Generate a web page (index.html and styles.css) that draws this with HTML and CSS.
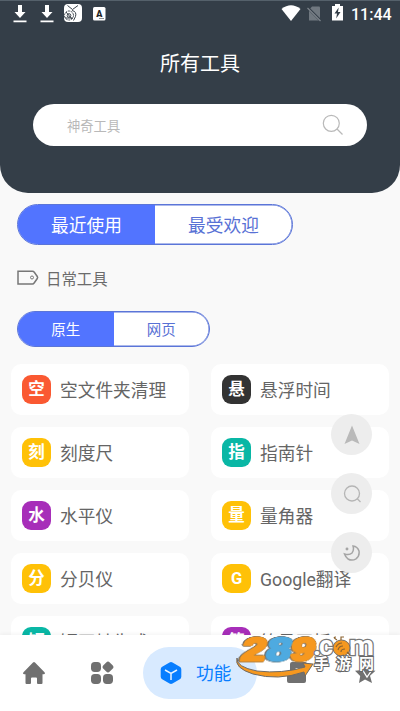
FILE: index.html
```html
<!DOCTYPE html>
<html lang="zh-CN">
<head>
<meta charset="utf-8">
<title>所有工具</title>
<link rel="stylesheet" href="styles.css">
</head>
<body>
<div class="screen">
  <header class="header">
    <div class="status">
      <div class="status-left">
        <svg width="14" height="18" viewBox="0 0 14 18"><path d="M5 0h4v7h3.500L7 13 1.500 7H5zM.5 15.500h13v1.800H.5z" fill="#fff"/></svg>
        <svg width="14" height="18" viewBox="0 0 14 18"><path d="M5 0h4v7h3.500L7 13 1.500 7H5zM.5 15.500h13v1.800H.5z" fill="#fff"/></svg>
        <svg class="app-note" width="18" height="18" viewBox="0 0 18 18"><rect width="18" height="18" rx="4" fill="#fff"/><g fill="none" stroke="#3a424a"><path d="M3.500 1.500 8.500 5.500 14 1.500"/><circle cx="5" cy="11.500" r="4.500" stroke-dasharray="2 .8"/><circle cx="5" cy="11.500" r="1.800"/><path d="M8 6.500q5 1 3.500 6l-2 4M1 14h8M2 8l6 7"/></g></svg>
        <svg class="app-a" width="13" height="14" viewBox="0 0 13 14"><rect width="12.500" height="13.500" rx="1.500" fill="#fff"/><text x="6.200" y="10" text-anchor="middle" class="app-letter">A</text><path d="M6 11.500h5" stroke="#59636c" stroke-width=".7"/></svg>
      </div>
      <div class="status-right">
        <svg class="wifi" width="20" height="17" viewBox="0 0 20 17"><path d="M.5 4Q10-3.500 19.500 4L10 16z" fill="#fff"/></svg>
        <svg class="sim" width="15" height="16" viewBox="0 0 15 16"><path d="M5 .5h7q1 0 1 1v13H2V4z" fill="#707880"/><path d="M0 1 14 15" stroke="#343e48" stroke-width="2.500"/><path d="M.5 2 13.500 15" stroke="#7c848b" stroke-width="1.200"/></svg>
        <svg class="battery" width="11" height="17" viewBox="0 0 11 17"><path d="M3 0h5v2h3v14.500H0V2h3z" fill="#fff"/><path d="M6.700 3.500 2.500 9.500H5l-.8 5L8.500 8H6z" fill="#343e48"/></svg>
        <span class="clock">11:44</span>
      </div>
    </div>
    <h1 class="title">所有工具</h1>
    <div class="search">
      <span>神奇工具</span>
      <svg width="22" height="22" viewBox="0 0 22 22" fill="none" stroke="#b9b9b9" stroke-width="1.200"><circle cx="9.300" cy="9.300" r="8"/><path d="m15 15 5.500 5.500"/></svg>
    </div>
  </header>

  <main class="content">
    <div class="tabs tabs-large"><span class="tab tab-on">最近使用</span><span class="tab">最受欢迎</span></div>
    <div class="section">
      <svg width="22" height="16" viewBox="0 0 22 16" fill="none" stroke="#777" stroke-width="1.500"><path d="M1 1.200h14.500q1 0 1.800 1l3 4.300q.7 1 0 2l-3 4.300q-.8 1.200-1.800 1.200H1z"/><circle cx="15" cy="7.500" r="1.500" stroke-width="1"/></svg>
      <span>日常工具</span>
    </div>
    <div class="tabs tabs-small"><span class="tab tab-on">原生</span><span class="tab">网页</span></div>
    <div class="grid">
      <div class="card"><b class="badge red">空</b><span class="name">空文件夹清理</span></div>
      <div class="card"><b class="badge dark">悬</b><span class="name">悬浮时间</span></div>
      <div class="card"><b class="badge yellow">刻</b><span class="name">刻度尺</span></div>
      <div class="card"><b class="badge teal">指</b><span class="name">指南针</span></div>
      <div class="card"><b class="badge purple">水</b><span class="name">水平仪</span></div>
      <div class="card"><b class="badge yellow">量</b><span class="name">量角器</span></div>
      <div class="card"><b class="badge yellow">分</b><span class="name">分贝仪</span></div>
      <div class="card"><b class="badge yellow">G</b><span class="name">Google翻译</span></div>
      <div class="card"><b class="badge teal">短</b><span class="name">短网址生成</span></div>
      <div class="card"><b class="badge purple">简</b><span class="name">简易画板</span></div>
    </div>
  </main>

  <div class="floating">
    <span class="fab"><svg width="16" height="20" viewBox="0 0 16 20"><path d="M8 .5 15.500 19 8 15.500.5 19z" fill="#b9b9b9"/></svg></span>
    <span class="fab"><svg width="18" height="18" viewBox="0 0 18 18" fill="none" stroke="#b5b5b5" stroke-width="1.300"><circle cx="9" cy="8.500" r="7.500"/><path d="m14 13.500 3.500 3.500"/></svg></span>
    <span class="fab"><svg width="18" height="18" viewBox="0 0 18 18" fill="none" stroke="#a5a5a5" stroke-width="1.500"><path d="M10 2q4.500.5 6 5 .8 5-3 7.800-4 2.500-8 .2Q2.500 13 1.500 10q5 1.500 7.500-1 2.300-3 1-7z"/><circle cx="4" cy="5" r=".7" fill="#a5a5a5"/></svg></span>
  </div>

  <nav class="nav">
    <span class="nav-item"><svg width="24" height="24" viewBox="0 0 24 24"><path d="M11 1.500q1-1 2 0l9.500 9.700q1.200 1.800-.8 2h-1.200V22q0 1-1 1H16q-1 0-1-1v-4.500q0-1-1-1h-4q-1 0-1 1V22q0 1-1 1H4.500q-1 0-1-1v-8.800H2.300q-2-.2-.8-2z" fill="#707070"/></svg></span>
    <span class="nav-item"><svg width="24" height="24" viewBox="0 0 24 24" fill="#707070"><rect x="1" y="1" width="10" height="10" rx="3.700"/><rect x="1" y="13" width="10" height="10" rx="3.700"/><rect x="13" y="13" width="10" height="10" rx="3.700"/><rect x="13.500" y="1.500" width="9" height="9" rx="2.500" transform="rotate(45 18 6)"/></svg></span>
    <span class="nav-active"><svg width="22" height="24" viewBox="0 0 22 24"><path d="M9.500 1.500q1.500-.8 3 0l7.300 4.200q1.500.8 1.500 2.500v7.600q0 1.700-1.500 2.500l-7.300 4.200q-1.500.8-3 0l-7.300-4.200Q.7 17.500.7 15.800V8.200q0-1.700 1.500-2.500z" fill="#087eff"/><path d="m5 9 6 3.500L17 9M11 12.500V19" fill="none" stroke="#e9f4ff" stroke-width="1.500"/></svg><span class="nav-label">功能</span></span>
    <span class="nav-item"><svg width="24" height="24" viewBox="0 0 24 24" fill="#707070"><path d="M4 3q0-2 2-2h13q2 0 2 2v4H10L8 10H4z"/><path d="M1 12q0-2 2-2h4.500L10 8h8q2 0 2 2v10q0 2-2 2H3q-2 0-2-2z"/></svg></span>
    <span class="nav-item"><svg width="24" height="24" viewBox="0 0 24 24"><path d="m11 3 3 6 7.500.8-5.500 5 2 7.200-7-3.500L5 22l1.200-7L1 9.800 8 9z" fill="#707070"/><path d="m8 8 5 8 7-10" stroke="#fff" stroke-width="1.300" fill="none"/></svg></span>
  </nav>

  <svg class="brand" width="145" height="60" viewBox="0 0 145 60">
    <path d="M2 22q-1 9 20 13 25 3 48-4l-2-4 10 1-8 12-1-4Q43 45 18 38-1 32 2 22z" fill="#f6981f" stroke="#6f6a64" stroke-width="1"/>
    <g class="brand-number" transform="translate(1 24.500) skewX(-12)">
      <text x="4" y="0" textLength="24" lengthAdjust="spacingAndGlyphs" class="orange">2</text>
      <text x="29" y="0" textLength="24" lengthAdjust="spacingAndGlyphs" class="blue">8</text>
      <text x="53" y="0" textLength="24" lengthAdjust="spacingAndGlyphs" class="orange">9</text>
    </g>
    <g class="brand-domain"><text x="78" y="18.500">.</text><text x="84" y="18.500" textLength="14" lengthAdjust="spacingAndGlyphs">c</text><text x="114" y="18.500" textLength="25" lengthAdjust="spacingAndGlyphs">m</text></g>
    <ellipse cx="106.500" cy="12" rx="8.500" ry="8" fill="#f6981f" stroke="#777067"/><path d="M102 4q-5-3-1-3M106 4V1h3M101 11q2-4 6-4M103 14q1-4 5-4M106 16q0-3 4-3M112 16l3 3" fill="none" stroke="#8b6330" stroke-width="1.200"/>
    <g class="brand-site"><text x="79" y="33">手</text><text x="101" y="33">游</text><text x="124" y="33">网</text></g>
  </svg>
</div>
</body>
</html>
```
FILE: styles.css
```css
* { box-sizing: border-box; }
body { margin: 0; font-family: Roboto, "Noto Sans CJK SC", sans-serif; }
svg { display: block; flex-shrink: 0; }
.screen { position: relative; width: 400px; height: 711px; overflow: hidden; background: #f9f9f9; display: flex; flex-direction: column; }
.header { height: 193px; flex-shrink: 0; background: #343e48; border-top: 1px solid #55616b; border-radius: 0 0 28px 28px; color: #fff; }
.status { height: 28px; display: flex; justify-content: space-between; padding: 4px 9px 0 13px; }
.status-left { display: flex; gap: 13px; }
.app-note { margin-left: -3px; margin-top: -1px; }
.app-a { margin-top: 2px; margin-left: -2px; }
.app-letter { font-size: 9px; font-weight: 900; fill: #222; }
.status-right { display: flex; align-items: flex-start; }
.sim { margin: 1px 0 0 6px; }
.battery { margin: -1px 0 0 10px; }
.clock { font-size: 16px; line-height: 19px; font-weight: 500; margin-left: 8px; width: 40px; white-space: nowrap; }
.title { margin: 19px 0 0; text-align: center; font-size: 20px; line-height: 32px; font-weight: 400; }
.search { margin: 24px 33px 0; height: 42px; border-radius: 21px; background: #fff; display: flex; align-items: center; justify-content: space-between; padding: 0 23px 0 34px; color: #b9b9b9; font-size: 13.300px; }
.search svg { margin-top: -1px; }
.content { padding: 11px 11px 0; flex: 1; min-height: 0; overflow: hidden; }
.tabs { display: grid; grid-template-columns: 1fr 1fr; border: 1px solid #5b75d8; box-shadow: inset 0 0 0 .5px #5b75d8; overflow: hidden; background: #fff; margin-left: 6px; color: #5871d5; }
.tab { display: flex; align-items: center; justify-content: center; padding-bottom: 2px; }
.tab-on { background: #5274ff; color: #fff; }
.tabs-large { width: 276px; height: 41px; border-radius: 21px; font-size: 17.700px; }
.tabs-small { width: 193px; height: 36px; border-radius: 18px; font-size: 14.500px; }
.section { height: 66px; display: flex; align-items: center; padding-left: 6px; gap: 7px; color: #6b6b6b; font-size: 15.400px; }
.grid { display: grid; grid-template-columns: 178px 178px; grid-auto-rows: 51px; gap: 12px 22px; margin-top: 17px; }
.card { background: #fff; border-radius: 10px; padding-left: 11px; display: flex; align-items: center; gap: 9px; color: #656565; font-size: 17.700px; white-space: nowrap; }
.name { margin-top: -2px; }
.badge { width: 29px; height: 29px; border-radius: 9px; display: flex; align-items: center; justify-content: center; color: #fff; font-size: 16.500px; line-height: 29px; }
.red { background: #fa5932; }
.dark { background: #333; }
.yellow { background: #ffc107; }
.teal { background: #09b7a5; }
.purple { background: #a72eb9; }
.floating { position: absolute; left: 331px; top: 414px; display: flex; flex-direction: column; gap: 18px; }
.fab { width: 41px; height: 41px; border-radius: 50%; background: #ededed; display: flex; align-items: center; justify-content: center; }
.nav { position: relative; height: 76px; flex-shrink: 0; background: #fff; box-shadow: 0 -1px 4px #0000000d; display: grid; grid-template-columns: 68px 68px 128px 68px 68px; align-items: center; }
.nav-item { display: flex; justify-content: center; padding-bottom: 1px; }
.nav-active { width: 114px; height: 52px; margin-left: 7px; border-radius: 26px; background: #d8eaff; color: #087eff; display: flex; align-items: center; padding-left: 17px; gap: 14px; font-size: 17.700px; }
.nav-label { margin-top: -2px; }
.brand { position: absolute; left: 235px; top: 636px; }
.brand-number { font-family: "Liberation Sans", sans-serif; font-size: 32px; font-weight: 700; stroke-width: 3px; stroke-linejoin: round; paint-order: stroke; filter: drop-shadow(.6px 0 0 #6f6a64) drop-shadow(-.6px 0 0 #6f6a64) drop-shadow(0 .6px 0 #6f6a64); }
.orange { fill: #f6981f; stroke: #f6981f; }
.blue { fill: #4eaae0; stroke: #4eaae0; }
.brand-domain { font-family: Roboto, sans-serif; font-size: 28px; font-weight: 700; fill: #fff; stroke: #777; stroke-width: 2.500px; paint-order: stroke; }
.brand-site { font-family: "Noto Sans CJK SC", sans-serif; font-size: 15px; font-weight: 700; fill: #fff; stroke: #666; stroke-width: 2px; paint-order: stroke; }
```
